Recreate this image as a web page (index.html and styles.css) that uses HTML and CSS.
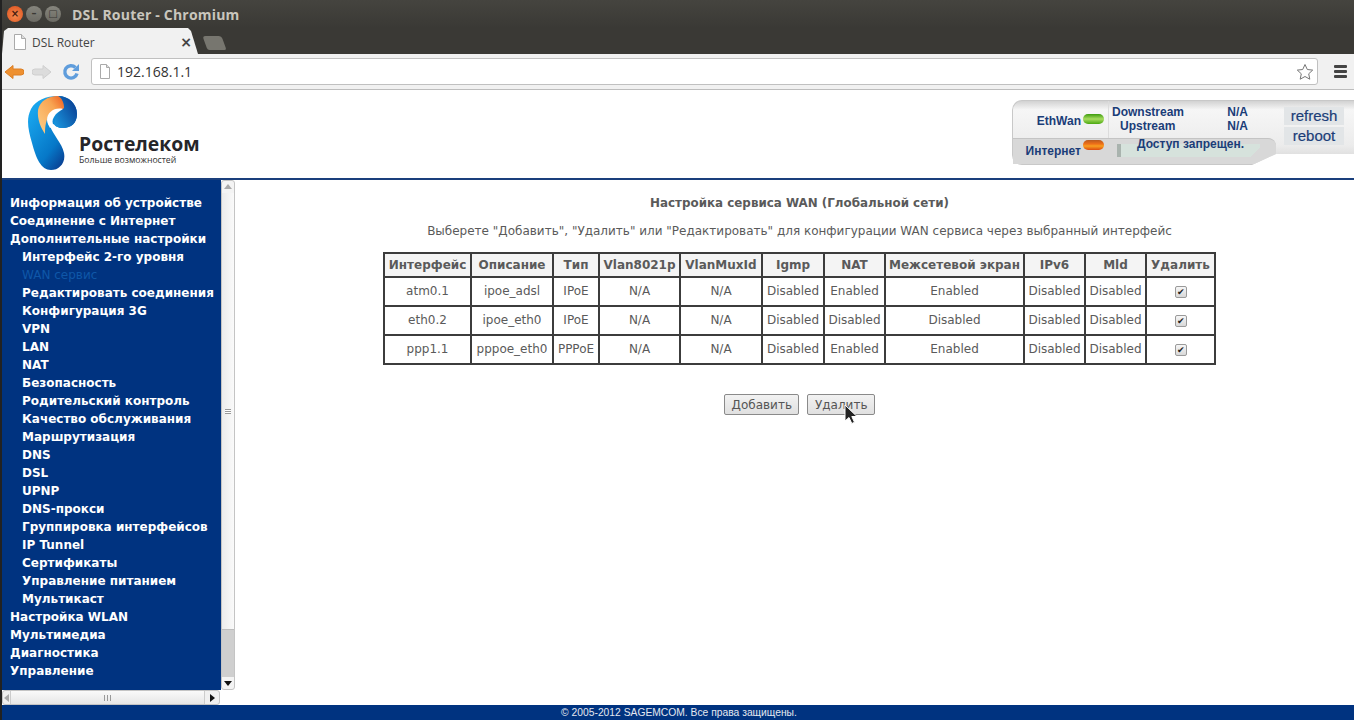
FILE: index.html
```html
<!DOCTYPE html>
<html lang="ru">
<head>
    <meta charset="UTF-8">
    <title>DSL Router - Chromium</title>
    <link rel="stylesheet" href="styles.css">
</head>
<body>
    <div class="titlebar">
        <div class="win-buttons">
            <span class="win-btn win-close">&#215;</span>
            <span class="win-btn win-min">&#8211;</span>
            <span class="win-btn win-max">&#9633;</span>
        </div>
        <span class="win-title">DSL Router - Chromium</span>
    </div>
    <div class="tabstrip">
        <div class="tab">
            <svg class="page-icon" width="14" height="16" viewBox="0 0 14 16"><path d="M1.500.5h7l4 4v11h-11z" fill="#fff" stroke="#aaa"/><path d="M8.500.5v4h4" fill="#ddd" stroke="#aaa"/></svg>
            <span class="tab-title">DSL Router</span>
            <span class="tab-close">&#215;</span>
        </div>
        <div class="newtab"></div>
    </div>
    <div class="toolbar">
        <svg width="20" height="18" viewBox="0 0 20 18"><path d="M1 9l8-6.500V6h8a3 3 0 0 1 0 6H9v3.500z" fill="#ee9030" stroke="#dc7f24"/></svg>
        <svg width="20" height="18" viewBox="0 0 20 18"><path d="M19 9l-8-6.500V6H3a3 3 0 0 0 0 6h8v3.500z" fill="#dcdcdc" stroke="#cfcfcf"/></svg>
        <svg class="nav-reload" width="18" height="18" viewBox="0 0 18 18"><path d="M15 10.500a6.200 6.200 0 1 1-1.600-6" fill="none" stroke="#5f9ddc" stroke-width="3.400"/><path d="M17 1v7h-7z" fill="#5f9ddc"/></svg>
        <div class="omnibox">
            <svg width="12" height="15" viewBox="0 0 12 15"><path d="M1.500.5h6l3 3v11h-9z" fill="#fff" stroke="#aaa"/><path d="M7.500.5v3h3" fill="#ddd" stroke="#aaa"/></svg>
            <span class="url">192.168.1.1</span>
            <svg class="star" width="18" height="18" viewBox="0 0 18 18"><path d="M9 1.500l2.300 5 5.400.6-4 3.700 1.100 5.400L9 13.500l-4.800 2.700 1.100-5.400-4-3.700 5.400-.6z" fill="#fff" stroke="#777"/></svg>
        </div>
        <div class="menu-icon"><span></span><span></span><span></span></div>
    </div>
    <header class="router-header">
        <div class="logo">
            <svg width="52" height="76" viewBox="0 0 52 76">
                <defs>
                    <linearGradient id="logoBlue" x1="0.1" y1="0.2" x2="0.8" y2="1">
                        <stop offset="0" stop-color="#18a4ec"/>
                        <stop offset="0.6" stop-color="#0678c8"/>
                        <stop offset="1" stop-color="#0a2c80"/>
                    </linearGradient>
                    <linearGradient id="logoLobe" x1="0" y1="1" x2="1" y2="0.2">
                        <stop offset="0" stop-color="#1a9ce4"/>
                        <stop offset="1" stop-color="#0a3c90"/>
                    </linearGradient>
                    <linearGradient id="logoOrange" x1="0" y1="1" x2="1" y2="0">
                        <stop offset="0" stop-color="#fcd08a"/>
                        <stop offset="0.65" stop-color="#f8a552"/>
                        <stop offset="1" stop-color="#ee5a1e"/>
                    </linearGradient>
                </defs>
                <path d="M31 1C42 1 50 9 50 19C50 28 44 33 36 33C31 33 28 31 27 29L23 31C26 40 35 48 37 58C39 68 32 75 24 75C14 75 9 63 5 48C1 34-1 24 4 14C9 5 19 1 31 1Z" fill="url(#logoBlue)"/>
                <path d="M31 1C42 1 50 9 50 19C50 28 44 33 36 33C31 33 28 31 27 29C28 22 32 16 37 12C36 7 34 3 31 1Z" fill="url(#logoLobe)"/>
                <path d="M31 1C21 1 13 6 11 15C10 24 14 33 18 39C18 31 19 23 24 18C28 15 35 15 37 13C37 8 35 3 31 1Z" fill="url(#logoOrange)"/>
                <path d="M36 14C28 12 20 17 20 25C20 28 22 31 23 33L27 31C25 28 25 25 27 22C29 18 33 16 36 14Z" fill="#fff"/>
            </svg>
            <div class="logo-text">
                <div class="logo-name">Ростелеком</div>
                <div class="logo-sub">Больше возможностей</div>
            </div>
        </div>
        <div class="status-panel">
            <div class="status-main">
                <div class="status-row">
                    <div class="status-led-group">
                        <span class="status-label">EthWan</span>
                        <span class="led led-green"></span>
                    </div>
                    <div class="stream">
                        <div class="stream-row"><span>Downstream</span><span>N/A</span></div>
                        <div class="stream-row stream-up"><span>Upstream</span><span>N/A</span></div>
                    </div>
                </div>
                <div class="status-row status-bottom">
                    <div class="status-led-group inet">
                        <span class="status-label">Интернет</span>
                        <span class="led led-orange"></span>
                    </div>
                    <div class="access">Доступ запрещен.</div>
                </div>
            </div>
            <div class="status-actions">
                <span class="status-action">refresh</span>
                <span class="status-action">reboot</span>
            </div>
        </div>
    </header>
    <div class="page-body">
        <div class="side-wrap">
            <div class="side-top">
                <nav class="menu">
                    <a class="menu-item">Информация об устройстве</a>
                    <a class="menu-item">Соединение с Интернет</a>
                    <a class="menu-item">Дополнительные настройки</a>
                    <a class="menu-item sub">Интерфейс 2-го уровня</a>
                    <a class="menu-item sub current">WAN сервис</a>
                    <a class="menu-item sub">Редактировать соединения</a>
                    <a class="menu-item sub">Конфигурация 3G</a>
                    <a class="menu-item sub">VPN</a>
                    <a class="menu-item sub">LAN</a>
                    <a class="menu-item sub">NAT</a>
                    <a class="menu-item sub">Безопасность</a>
                    <a class="menu-item sub">Родительский контроль</a>
                    <a class="menu-item sub">Качество обслуживания</a>
                    <a class="menu-item sub">Маршрутизация</a>
                    <a class="menu-item sub">DNS</a>
                    <a class="menu-item sub">DSL</a>
                    <a class="menu-item sub">UPNP</a>
                    <a class="menu-item sub">DNS-прокси</a>
                    <a class="menu-item sub">Группировка интерфейсов</a>
                    <a class="menu-item sub">IP Tunnel</a>
                    <a class="menu-item sub">Сертификаты</a>
                    <a class="menu-item sub">Управление питанием</a>
                    <a class="menu-item sub">Мультикаст</a>
                    <a class="menu-item">Настройка WLAN</a>
                    <a class="menu-item">Мультимедиа</a>
                    <a class="menu-item">Диагностика</a>
                    <a class="menu-item">Управление</a>
                </nav>
                <div class="vscroll">
                    <span class="arrow arrow-up"></span>
                    <div class="vtrack"><div class="vthumb"><span class="grip-h"></span></div></div>
                    <span class="arrow arrow-down"></span>
                </div>
            </div>
            <div class="hscroll">
                <span class="arrow arrow-left"></span>
                <div class="hthumb"><span class="grip-v"></span></div>
                <span class="arrow arrow-right"></span>
            </div>
        </div>
        <main class="content">
            <h1 class="page-title">Настройка сервиса WAN (Глобальной сети)</h1>
            <p class="page-hint">Выберете "Добавить", "Удалить" или "Редактировать" для конфигурации WAN сервиса через выбранный интерфейс</p>
            <table class="wan-table">
                <thead>
                    <tr>
                        <th class="c-if">Интерфейс</th>
                        <th class="c-desc">Описание</th>
                        <th class="c-type">Тип</th>
                        <th class="c-vlan">Vlan8021p</th>
                        <th class="c-mux">VlanMuxId</th>
                        <th class="c-igmp">Igmp</th>
                        <th class="c-nat">NAT</th>
                        <th class="c-fw">Межсетевой экран</th>
                        <th class="c-v6">IPv6</th>
                        <th class="c-mld">Mld</th>
                        <th class="c-del">Удалить</th>
                    </tr>
                </thead>
                <tbody>
                    <tr>
                        <td>atm0.1</td><td>ipoe_adsl</td><td>IPoE</td><td>N/A</td><td>N/A</td><td>Disabled</td><td>Enabled</td><td>Enabled</td><td>Disabled</td><td>Disabled</td>
                        <td><input type="checkbox" class="row-check" checked></td>
                    </tr>
                    <tr>
                        <td>eth0.2</td><td>ipoe_eth0</td><td>IPoE</td><td>N/A</td><td>N/A</td><td>Disabled</td><td>Disabled</td><td>Disabled</td><td>Disabled</td><td>Disabled</td>
                        <td><input type="checkbox" class="row-check" checked></td>
                    </tr>
                    <tr>
                        <td>ppp1.1</td><td>pppoe_eth0</td><td>PPPoE</td><td>N/A</td><td>N/A</td><td>Disabled</td><td>Enabled</td><td>Enabled</td><td>Disabled</td><td>Disabled</td>
                        <td><input type="checkbox" class="row-check" checked></td>
                    </tr>
                </tbody>
            </table>
            <div class="actions">
                <button class="action-btn">Добавить</button>
                <div class="delete-wrap">
                    <button class="action-btn">Удалить</button>
                    <svg class="cursor" width="14" height="21" viewBox="0 0 14 21"><path d="M1 1v16l4-3.500 2.800 6 2.700-1.200-2.700-5.800H13z" fill="#222" stroke="#fff"/></svg>
                </div>
            </div>
        </main>
    </div>
    <footer class="footer">&copy; 2005-2012 SAGEMCOM. Все права защищены.</footer>
</body>
</html>
```

FILE: styles.css
```css
* {
    box-sizing: border-box;
}

html, body {
    height: 720px;
    overflow: hidden;
}

body {
    margin: 0;
    font-family: "DejaVu Sans", sans-serif;
    background-color: #ffffff;
    display: flex;
    flex-direction: column;
    border-left: 2px solid #222;
}

/* window chrome */
.titlebar {
    height: 28px;
    background: linear-gradient(#45443f, #3a3935);
    display: flex;
    align-items: center;
    padding-left: 7px;
    margin-left: -2px;
    flex-shrink: 0;
}

.win-buttons {
    display: flex;
    gap: 3px;
    margin-right: 11px;
}

.win-btn {
    width: 16px;
    height: 16px;
    border-radius: 50%;
    background: linear-gradient(#86857d, #6c6b64);
    color: #3a3935;
    font-size: 10px;
    font-weight: bold;
    line-height: 16px;
    text-align: center;
}

.win-close {
    background: radial-gradient(circle at 50% 60%, #f58a4e, #dd4f1c);
    color: #4a2010;
}

.win-title {
    color: #c9c6bd;
    font-family: "Open Sans", sans-serif;
    font-size: 14px;
    font-weight: bold;
    letter-spacing: 0.2px;
}

.tabstrip {
    height: 26px;
    background-color: #3a3935;
    display: flex;
    align-items: flex-end;
    margin-left: -2px;
    padding-left: 2px;
    flex-shrink: 0;
}

.tab {
    width: 196px;
    height: 26px;
    background-color: #f1f1f1;
    clip-path: polygon(0 100%, 2px 3px, 6px 0, 186px 0, 189px 3px, 196px 100%);
    display: flex;
    align-items: center;
    padding: 2px 6px 0 11px;
}

.page-icon {
    margin-right: 5px;
}

.tab-title {
    font-family: "Open Sans", sans-serif;
    font-size: 12px;
    color: #444;
    flex: 1;
}

.tab-close {
    font-size: 14px;
    font-weight: bold;
    color: #444;
}

.newtab {
    width: 19px;
    height: 14px;
    margin: 0 0 4px 7px;
    background-color: #77766f;
    border-radius: 3px 3px 2px 2px;
    transform: skewX(20deg);
}

.toolbar {
    height: 36px;
    background-color: #f1f1f1;
    border-bottom: 1px solid #bdbdbd;
    display: flex;
    align-items: center;
    padding-left: 2px;
    gap: 8px;
    flex-shrink: 0;
}

.nav-reload {
    margin-left: 2px;
}

.omnibox {
    width: 1227px;
    height: 27px;
    margin-left: 3px;
    background-color: #fff;
    border: 1px solid #c0c0c0;
    border-radius: 3px;
    display: flex;
    align-items: center;
    padding: 0 3px 0 7px;
}

.url {
    font-family: "Open Sans", sans-serif;
    font-size: 14px;
    color: #333;
    margin-left: 6px;
    flex: 1;
}

.menu-icon {
    width: 13px;
    margin-left: 8px;
    display: flex;
    flex-direction: column;
    gap: 2px;
}

.menu-icon span {
    height: 3px;
    background-color: #444;
    border-radius: 1px;
}

/* router header */
.router-header {
    height: 90px;
    border-bottom: 2px solid #1a3f7c;
    display: flex;
    justify-content: space-between;
    flex-shrink: 0;
}

.logo {
    position: relative;
    width: 240px;
    padding: 5px 0 0 25px;
}

.logo-text {
    position: absolute;
    left: 77px;
    top: 43px;
}

.logo-name {
    font-family: "Open Sans", sans-serif;
    font-size: 19.400px;
    font-weight: 700;
    line-height: 22px;
    color: #26262a;
}

.logo-sub {
    font-family: "Open Sans", sans-serif;
    font-size: 8.700px;
    line-height: 10px;
    color: #333;
}

.status-panel {
    width: 342px;
    height: 65px;
    margin-top: 10px;
    background: linear-gradient(#d2d2d2, #f6f6f6 14%, #ececec 70%, #d4d4d4);
    border: 1px solid #c8c8c8;
    border-right: none;
    border-radius: 10px 0 0 10px;
    clip-path: polygon(0 0, 100% 0, 100% 54px, 264px 54px, 240px 65px, 0 65px);
    display: flex;
    font-family: "Liberation Sans", sans-serif;
    font-weight: bold;
    color: #1b3d78;
    font-size: 12px;
}

.status-main {
    width: 250px;
    display: flex;
    flex-direction: column;
}

.status-row {
    display: flex;
    height: 38px;
}

.status-bottom {
    height: 26px;
    background-color: #d8d8d8;
    border-top: 1px solid #c4c4c4;
    border-radius: 0 8px 0 0;
    width: 263px;
}

.status-led-group {
    width: 91px;
    display: flex;
    align-items: flex-start;
    justify-content: flex-end;
    padding-top: 12px;
}

.status-led-group.inet {
    padding-top: 4px;
}

.status-label {
    line-height: 17px;
}

.led {
    width: 21px;
    height: 10px;
    border-radius: 5px;
    margin: 1px 0 0 2px;
    flex-shrink: 0;
}

.inet .led {
    margin-top: -3px;
}

.led-green {
    background: linear-gradient(#3c9c0c, #a8dc60 50%, #4aa810);
}

.led-orange {
    background: linear-gradient(#b85a20, #f07018 40%, #f8a020 60%, #dd4a10);
}

.stream {
    width: 155px;
    margin-left: 4px;
    padding-top: 4px;
    border-left: 1px solid #dcdcdc;
}

.stream-row {
    display: flex;
    justify-content: space-between;
    line-height: 14px;
    padding: 0 15px 0 3px;
}

.stream-up {
    padding-left: 11px;
}

.access {
    width: 143px;
    height: 13px;
    margin: 5px 0 0 13px;
    background: linear-gradient(-45deg, transparent 7px, #d6e2dc 7px);
    border-left: 4px solid #a9b3ae;
    text-align: center;
    line-height: 0;
    white-space: nowrap;
    flex-shrink: 0;
}

.status-actions {
    flex: 1;
    display: flex;
    flex-direction: column;
    align-items: flex-start;
    gap: 2px;
    padding: 6px 0 0 21px;
    font-weight: normal;
    font-size: 15px;
}

.status-action {
    width: 60px;
    height: 18px;
    background-color: #e2e5e7;
    text-align: center;
    line-height: 18px;
    -webkit-text-stroke: 0.2px #1b3d78;
}

/* page body */
.page-body {
    height: 525px;
    display: flex;
    flex-shrink: 0;
}

.side-wrap {
    width: 233px;
    display: flex;
    flex-direction: column;
}

.side-top {
    height: 510px;
    display: flex;
}

.menu {
    width: 219px;
    background-color: #003380;
    padding-top: 14px;
    display: flex;
    flex-direction: column;
}

.menu-item {
    display: block;
    height: 18px;
    line-height: 18px;
    padding-left: 8px;
    color: #ffffff;
    font-size: 12px;
    font-weight: bold;
    white-space: nowrap;
}

.menu-item.sub {
    padding-left: 20px;
}

.menu-item.current {
    color: #0f57a8;
    font-weight: normal;
}

.vscroll {
    width: 14px;
    border: 1px solid #c4c4c4;
    border-radius: 3px;
    background-color: #f4f4f4;
    display: flex;
    flex-direction: column;
    align-items: center;
}

.vtrack {
    flex: 1;
    width: 100%;
    background-color: #cfcfcf;
    display: flex;
    margin: 12px 0;
}

.vthumb {
    width: 100%;
    height: 437px;
    background: linear-gradient(90deg, #ececec, #fafafa);
    border-bottom: 1px solid #bdbdbd;
    display: flex;
    align-items: center;
    justify-content: center;
}

.grip-h {
    width: 6px;
    height: 5px;
    border-top: 1px solid #999;
    border-bottom: 1px solid #999;
    background: linear-gradient(#fff 40%, #999 40%, #999 60%, #fff 60%);
}

.arrow {
    width: 0;
    height: 0;
    flex-shrink: 0;
    border: 4px solid transparent;
}

.arrow-up {
    border-bottom: 5px solid #aaa;
    border-top: 0;
    margin-top: 3px;
    margin-bottom: -8px;
}

.arrow-down {
    border-top: 5px solid #111;
    border-bottom: 0;
    margin-bottom: 3px;
    margin-top: -8px;
}

.hscroll {
    width: 218px;
    height: 15px;
    background-color: #f0f0f0;
    border: 1px solid #c4c4c4;
    border-radius: 3px;
    display: flex;
    align-items: center;
}

.hthumb {
    width: 195px;
    height: 13px;
    margin-left: 1px;
    background: linear-gradient(#fafafa, #e6e6e6);
    border-left: 1px solid #ccc;
    border-right: 1px solid #ccc;
    display: flex;
    align-items: center;
    justify-content: center;
}

.grip-v {
    width: 7px;
    height: 6px;
    background: repeating-linear-gradient(90deg, #999 0 1px, transparent 1px 3px);
}

.arrow-left {
    border-right: 5px solid #aaa;
    border-left: 0;
    margin-left: 1px;
}

.arrow-right {
    border-left: 5px solid #111;
    border-right: 0;
    margin-left: 5px;
}

.content {
    flex: 1;
    padding: 16px 0 0 10px;
    display: flex;
    flex-direction: column;
    align-items: center;
    color: #5a5a5a;
    font-size: 12px;
}

.page-title {
    margin: 0;
    font-size: 11.900px;
    line-height: 14px;
    font-weight: bold;
}

.page-hint {
    margin: 14px 0 14px;
    line-height: 14px;
}

.wan-table {
    width: 831px;
    border-collapse: collapse;
    border: 2px solid #3c3c3c;
    table-layout: fixed;
}

.wan-table th, .wan-table td {
    border: 2px solid #3c3c3c;
    text-align: center;
    padding: 0;
    white-space: nowrap;
}

.wan-table th {
    height: 24px;
    background-color: #f4f4f4;
    font-weight: bold;
}

.wan-table td {
    height: 29px;
    padding-bottom: 2px;
}

.c-if { width: 87px; }
.c-desc { width: 82px; }
.c-type { width: 46px; }
.c-vlan { width: 81px; }
.c-mux { width: 82px; }
.c-igmp { width: 62px; }
.c-nat { width: 61px; }
.c-fw { width: 139px; }
.c-v6 { width: 61px; }
.c-mld { width: 61px; }
.c-del { width: 69px; }

.row-check {
    appearance: none;
    position: relative;
    width: 12px;
    height: 12px;
    margin: 2px 0 0;
    vertical-align: middle;
    background: linear-gradient(#f6f6f6, #d8d8d8);
    border: 1px solid #9a9a9a;
    border-radius: 2px;
}

.row-check::after {
    content: "\2714";
    position: absolute;
    top: 0;
    left: 1px;
    font-size: 9px;
    line-height: 10px;
    color: #222;
}

.actions {
    display: flex;
    gap: 8px;
    margin-top: 29px;
}

.delete-wrap {
    position: relative;
}

.action-btn {
    height: 21px;
    padding: 1px 6.500px 0;
    font-family: "DejaVu Sans", sans-serif;
    font-size: 12px;
    color: #555;
    background: linear-gradient(#f2f2f2, #e0e0e0);
    border: 1px solid #8a8a8a;
    border-radius: 2px;
}

.cursor {
    position: absolute;
    left: 37px;
    top: 10px;
}

.footer {
    height: 15px;
    margin-left: -2px;
    padding-left: 4px;
    background-color: #003380;
    color: #e4e8f0;
    font-family: "Liberation Sans", sans-serif;
    font-size: 10.300px;
    line-height: 15px;
    text-align: center;
    flex-shrink: 0;
}
```
